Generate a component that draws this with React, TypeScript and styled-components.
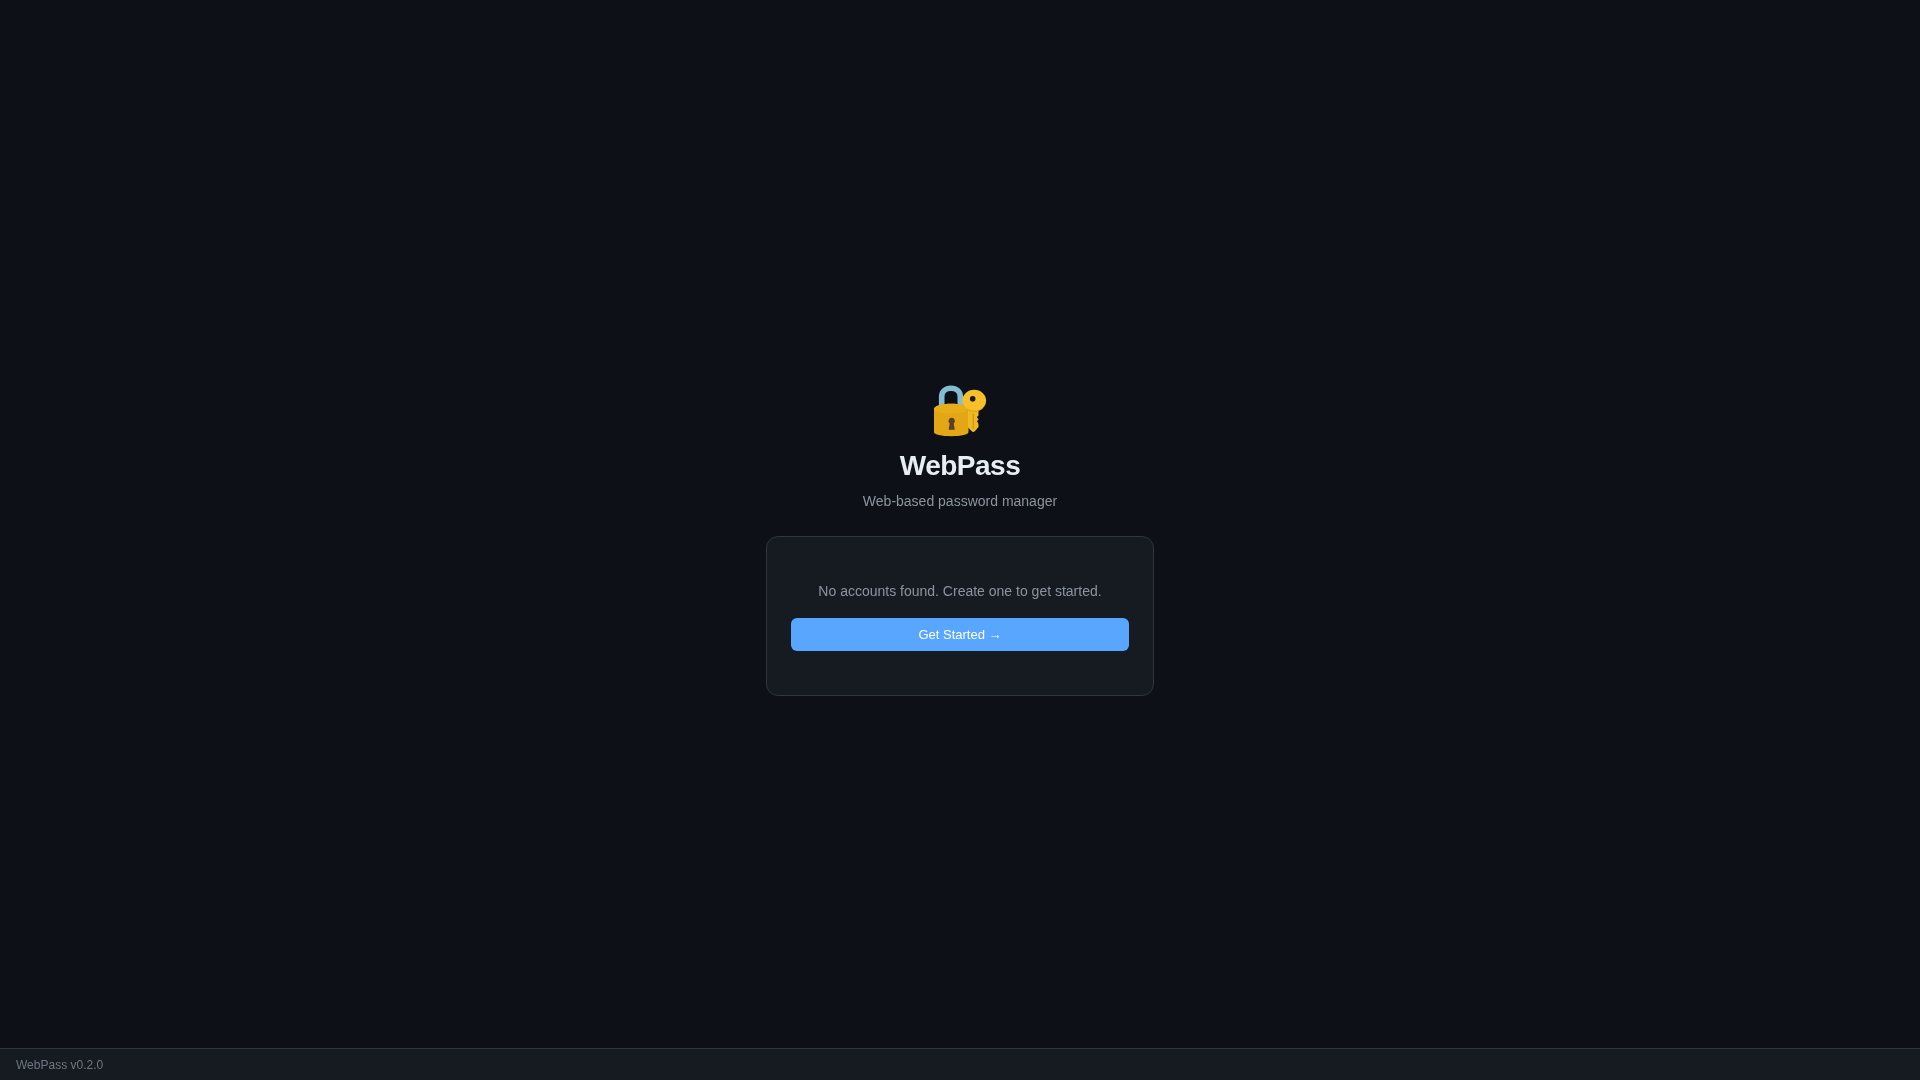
import React from "react";
import styled, { createGlobalStyle } from "styled-components";

const Global = createGlobalStyle`
  * { box-sizing: border-box; }
  html, body, #root { margin: 0; height: 100%; }
  body {
    background: #0d1117;
    color: #e6edf3;
    font-family: "Liberation Sans", Arial, sans-serif;
    -webkit-font-smoothing: antialiased;
  }
`;

const Page = styled.div`
  display: flex;
  flex-direction: column;
  height: 100vh;
  will-change: transform;
`;

const Main = styled.main`
  flex: 1;
  display: flex;
  align-items: center;
  justify-content: center;
  padding-top: 20px;
`;

const Column = styled.div`
  width: 388px;
  display: flex;
  flex-direction: column;
`;

const Header = styled.header`
  text-align: center;
  margin-bottom: 24px;
`;

const Logo = styled.div`
  height: 72px;
  display: flex;
  align-items: center;
  justify-content: center;
`;

const LogoImage = styled.svg`
  width: 56px;
  height: 56px;
  filter: blur(0.3px);
`;

const Title = styled.h1`
  margin: 0;
  font-size: 28px;
  font-weight: 700;
  line-height: 1.5;
  letter-spacing: -0.5px;
  color: #e6edf3;
`;

const Subtitle = styled.p`
  margin: 4px 0 0;
  font-size: 14px;
  line-height: 1.5;
  color: #8b949e;
`;

const Card = styled.section`
  background: #161b22;
  border: 1px solid #30363d;
  border-radius: 12px;
  padding: 24px;
`;

const Empty = styled.div`
  padding: 20px 0;
  text-align: center;
`;

const Message = styled.p`
  margin: 0 0 16px;
  font-size: 14px;
  line-height: 1.5;
  color: #8b949e;
`;

const PrimaryButton = styled.button`
  display: block;
  width: 100%;
  height: 33px;
  padding: 0 16px;
  border: none;
  border-radius: 6px;
  background: #58a6ff;
  color: #ffffff;
  font-family: inherit;
  font-size: 13px;
  cursor: pointer;
`;

const Footer = styled.footer`
  height: 32px;
  flex: none;
  display: flex;
  align-items: center;
  padding: 0 16px;
  background: #161b22;
  border-top: 1px solid #30363d;
  font-size: 12px;
  color: #6e7681;
`;

const LockKey = () => (
  <LogoImage viewBox="0 0 56 56" role="img" aria-label="🔐">
    <path
      d="M9.7 28V15.5C9.7 10.5 13.5 7.2 19 7.2C24.5 7.2 28.3 10.5 28.3 15.5V28"
      fill="none"
      stroke="#86bcd2"
      strokeWidth="5.6"
    />
    <path
      d="M2 28C2 25 9.5 22.7 19.3 22.7C29 22.7 36.5 25 36.5 28V51C36.5 53.5 29 55.2 19.3 55.2C9.5 55.2 2 53.5 2 51Z"
      fill="#e3a716"
    />
    <path
      d="M2 28C2 25 9.5 22.7 19.3 22.7C29 22.7 36.5 25 36.5 28C36.5 30.5 29 32.5 19.3 32.5C9.5 32.5 2 30.5 2 28Z"
      fill="#e8ae1a"
    />
    <path
      d="M19.7 36.8A3.2 3.2 0 0 1 21.7 42.5L22.8 48.7H16.6L17.7 42.5A3.2 3.2 0 0 1 19.7 36.8Z"
      fill="#5a3d2b"
    />
    <path
      d="M36 26H46.5V34.5Q45 35.5 45 36.5Q46.5 37.5 46.5 38.8Q45 39.8 45 40.8Q46.5 41.8 46.5 43.2V46L42.8 50.3C42 51.3 40.6 51.3 39.8 50.3L36 46.5Z"
      fill="#efb825"
    />
    <path d="M41.3 32.7V47.7" fill="none" stroke="#d59a12" strokeWidth="1.6" />
    <ellipse cx="42.2" cy="19.6" rx="11.9" ry="10.8" fill="#f6c02a" />
    <path d="M30.6 22.5A11.9 10.8 0 0 0 53.8 22A11.9 9.6 0 0 1 30.6 22.5Z" fill="#dba012" />
    <circle cx="40.7" cy="17.7" r="2.8" fill="#1c1710" />
  </LogoImage>
);

export default function App() {
  return (
    <Page>
      <Global />
      <Main>
        <Column>
          <Header>
            <Logo>
              <LockKey />
            </Logo>
            <Title>WebPass</Title>
            <Subtitle>Web-based password manager</Subtitle>
          </Header>
          <Card>
            <Empty>
              <Message>No accounts found. Create one to get started.</Message>
              <PrimaryButton>Get Started →</PrimaryButton>
            </Empty>
          </Card>
        </Column>
      </Main>
      <Footer>WebPass v0.2.0</Footer>
    </Page>
  );
}
